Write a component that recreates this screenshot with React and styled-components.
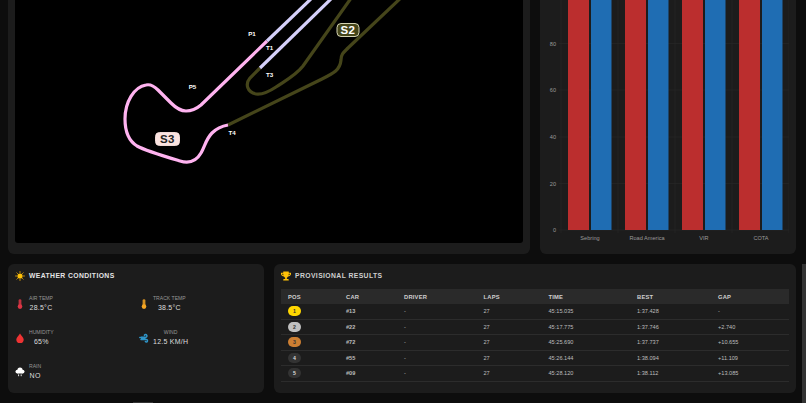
import React from "react";
import styled, { createGlobalStyle } from "styled-components";
import { FaTrophy } from "react-icons/fa";

const GlobalStyle = createGlobalStyle`
  html, body {
    margin: 0;
    height: 403px;
    overflow: hidden;
    background: #0d0d0d;
    font-family: "Liberation Sans", Arial, sans-serif;
  }
`;

const Page = styled.div`
  width: 806px;
  height: 403px;
  overflow: hidden;
  position: relative;
`;

const Grid = styled.div`
  display: grid;
  grid-template-columns: 256px 256px 256px;
  grid-template-rows: 294px 129px auto;
  column-gap: 10px;
  row-gap: 10px;
  margin-top: -40px;
  padding-left: 8px;
`;

const Card = styled.section`
  background: #1c1c1c;
  border-radius: 6px;
  padding: 7px;
  box-sizing: border-box;
  min-width: 0;
`;

const TrackCard = styled(Card)`
  grid-column: 1 / 3;
  padding-bottom: 11px;
`;

const ChartCard = styled(Card)`
  grid-column: 3;
`;

const ResultsCard = styled(Card)`
  grid-column: 2 / 4;
`;

const Canvas = styled.svg`
  display: block;
  width: 508px;
  height: 276px;
  background: #000;
  border-radius: 3px;
`;

const ChartSvg = styled.svg`
  display: block;
  width: 242px;
  height: 280px;
`;

const Title = styled.h3`
  display: flex;
  align-items: center;
  gap: 4px;
  margin: 0;
  height: 10px;
  font-size: 6.8px;
  line-height: 10px;
  font-weight: 700;
  letter-spacing: 0.4px;
  color: ${(p) => p.$color || "#e4e4e4"};
  svg {
    width: 10px;
    height: 10px;
    flex: none;
    color: #ffc107;
  }
`;

const WeatherGrid = styled.div`
  display: grid;
  grid-template-columns: 124px 110px;
  grid-auto-rows: 34px;
  margin-top: 15px;
`;

const Item = styled.div`
  display: flex;
  align-items: center;
  gap: 4px;
  height: 15px;
`;

const IconBox = styled.span`
  width: 10px;
  display: flex;
  justify-content: center;
  svg {
    display: block;
    width: 10px;
    height: 10px;
  }
`;

const ItemText = styled.div`
  display: flex;
  flex-direction: column;
  align-items: center;
  gap: 2px;
`;

const ItemLabel = styled.span`
  font-size: 5.1px;
  line-height: 6px;
  color: #969696;
`;

const ItemValue = styled.span`
  font-size: 7px;
  line-height: 9px;
  letter-spacing: 0.25px;
  color: #dcdcdc;
`;

const Table = styled.table`
  width: 508px;
  margin-top: 8px;
  border-collapse: collapse;
  table-layout: fixed;
  font-size: 5.6px;
  color: #bdbdbd;

  th {
    height: 15px;
    padding: 0 7px;
    background: #2a2a2a;
    font-size: 5.8px;
    font-weight: 700;
    letter-spacing: 0.2px;
    text-align: left;
    color: #cfcfcf;
  }
  td {
    height: 14.5px;
    padding: 0 7px;
    border-bottom: 0.6px solid #2c2c2c;
  }
`;

const CarCell = styled.td`
  font-weight: 700;
`;

const Pos = styled.span`
  display: flex;
  align-items: center;
  justify-content: center;
  width: 13px;
  height: 10px;
  border-radius: 5px;
  font-size: 5.2px;
  font-weight: 700;
  background: ${(p) => p.$bg};
  color: ${(p) => p.$fg};
`;

const ScrollThumb = styled.div`
  position: absolute;
  right: 0;
  top: 264px;
  bottom: 0;
  width: 4px;
  background: #333;
`;

const SlimMark = styled.div`
  position: absolute;
  left: 133px;
  bottom: 0;
  width: 20px;
  height: 1px;
  background: #333;
`;

const TrackLabel = styled.text`
  font-size: 6.2px;
  font-weight: 700;
  fill: #fff;
  text-anchor: middle;
`;

const SectorText = styled.text`
  font-size: 11.5px;
  font-weight: 700;
  letter-spacing: 0.5px;
  text-anchor: middle;
  fill: ${(p) => p.$fill};
`;

const AxisText = styled.text`
  font-size: 5.6px;
  fill: #9a9a9a;
  text-anchor: ${(p) => p.$anchor || "middle"};
`;

const SunIcon = () => (
  <svg viewBox="0 0 20 20">
    <circle cx="10" cy="10" r="5.2" fill="#ffc107" />
    <g stroke="#e6a50a" strokeWidth="1.6" strokeLinecap="round">
      <path d="M10 1v2.2M10 16.8V19M1 10h2.2M16.8 10H19M3.6 3.6l1.6 1.6M14.8 14.8l1.6 1.6M3.6 16.4l1.6-1.6M14.8 5.2l1.6-1.6" />
    </g>
  </svg>
);

const ThermoIcon = ({ color }) => (
  <svg viewBox="0 0 10 10">
    <rect x="3.6" y="0.2" width="2.8" height="7" rx="1.4" fill={color} opacity="0.85" />
    <circle cx="5" cy="7.6" r="2.3" fill={color} />
  </svg>
);

const DropIcon = () => (
  <svg viewBox="0 0 10 10">
    <path d="M5 0.4 C6 2.4 8.7 4.2 8.7 6.4 A3.7 3.6 0 0 1 1.3 6.4 C1.3 4.2 4 2.4 5 0.4Z" fill="#ee3333" />
  </svg>
);

const WindIcon = () => (
  <svg viewBox="0 0 10 10">
    <g fill="none" stroke="#2f95c8" strokeWidth="1.5" strokeLinecap="round">
      <path d="M0.8 4.4H6.6A1.4 1.4 0 1 0 5.4 2.2" />
      <path d="M2 6.6H7.4A1.2 1.2 0 1 1 6.4 8.6" />
    </g>
    <rect x="2" y="3.6" width="4.5" height="3.2" fill="#2f95c8" />
  </svg>
);

const RainIcon = () => (
  <svg viewBox="0 0 10 10">
    <g fill="#fff">
      <circle cx="2.4" cy="4.6" r="1.9" />
      <circle cx="5" cy="3.2" r="2.6" />
      <circle cx="7.6" cy="4.6" r="1.9" />
      <rect x="2.4" y="4" width="5.2" height="2.5" />
    </g>
    <path d="M3.6 7.4v1.8M6.2 7.4v1.8" stroke="#fff" strokeWidth="0.9" />
  </svg>
);

const results = [
  { pos: 1, car: "#13", laps: 27, time: "45:15.035", best: "1:37.428", gap: "-", bg: "#ffd700", fg: "#333" },
  { pos: 2, car: "#22", laps: 27, time: "45:17.775", best: "1:37.746", gap: "+2.740", bg: "#c0c0c0", fg: "#333" },
  { pos: 3, car: "#72", laps: 27, time: "45:25.690", best: "1:37.737", gap: "+10.655", bg: "#cd7f32", fg: "#333" },
  { pos: 4, car: "#55", laps: 27, time: "45:26.144", best: "1:38.094", gap: "+11.109", bg: "#333", fg: "#ddd" },
  { pos: 5, car: "#09", laps: 27, time: "45:28.120", best: "1:38.112", gap: "+13.085", bg: "#333", fg: "#ddd" },
];

const weather = [
  { label: "AIR TEMP", value: "28.5°C", icon: <ThermoIcon color="#dc3545" /> },
  { label: "TRACK TEMP", value: "38.5°C", icon: <ThermoIcon color="#f5a623" /> },
  { label: "HUMIDITY", value: "65%", icon: <DropIcon /> },
  { label: "WIND", value: "12.5 KM/H", icon: <WindIcon /> },
  { label: "RAIN", value: "NO", icon: <RainIcon /> },
];

const venues = [
  { name: "Sebring", x: 568 },
  { name: "Road America", x: 625 },
  { name: "VIR", x: 682 },
  { name: "COTA", x: 739 },
];

const ticks = [
  { label: "80", y: 43.5 },
  { label: "60", y: 90 },
  { label: "40", y: 137 },
  { label: "20", y: 183.5 },
  { label: "0", y: 230 },
];

function Sector({ x, y, w, fill, border, text, label }) {
  return (
    <g>
      <rect x={x - w / 2} y={y - 6.5} width={w} height={13} rx={4} fill={fill} stroke={border} strokeWidth="0.9" />
      <SectorText x={x} y={y + 4} $fill={text}>{label}</SectorText>
    </g>
  );
}

function Track() {
  return (
    <Canvas viewBox="15 -33 508 276">
      <g fill="none" strokeWidth="3.2" strokeLinecap="butt">
        <path
          stroke="#45451a"
          d="M228 125 L322 79 C334 73 340 70 341 60 C341 54 344 52 348 48 L405 -6"
        />
        <path
          stroke="#45451a"
          d="M260 68 L250 78 C245 84 247 92 256 94 C263 95 270 91 276 87 C288 79 296 75 303 66 L354 -6"
        />
        <path stroke="#d5d0fa" d="M267 41 L314 -4" />
        <path stroke="#d5d0fa" d="M260 68 L334 -4" />
        <path
          stroke="#ffb3f0"
          d="M267 41 L201 105 C195 110 191 111 186 111 C180 111 176 108 171 103 L158 90 C153 85 150 84 146 85 C134 87 125 102 125 119 C125 131 129 141 137 146 C146 151 170 158 180 161 C190 164 197 160 201 153 C205 146 206 139 212 133 C217 128 222 126 228 125"
        />
      </g>
      <TrackLabel x={252} y={36.2}>P1</TrackLabel>
      <TrackLabel x={269.5} y={49.5}>T1</TrackLabel>
      <TrackLabel x={269.5} y={77.2}>T3</TrackLabel>
      <TrackLabel x={192.5} y={89.2}>P5</TrackLabel>
      <TrackLabel x={232} y={135.2}>T4</TrackLabel>
      <Sector x={348} y={30} w={22} fill="#45451a" border="#e8e6c4" text="#fff" label="S2" />
      <Sector x={167.5} y={139} w={24} fill="#fbe3e0" border="#fbe3e0" text="#222" label="S3" />
    </Canvas>
  );
}

function Chart() {
  return (
    <ChartSvg viewBox="547 -33 242 280">
      {ticks.map((t) => (
        <g key={t.label}>
          <line x1={559} x2={789} y1={t.y} y2={t.y} stroke="#282828" strokeWidth="0.6" />
          <AxisText x={556} y={t.y + 2} $anchor="end">{t.label}</AxisText>
        </g>
      ))}
      {[561, 618, 675, 732, 789].map((x) => (
        <line key={x} x1={x} x2={x} y1={-33} y2={233} stroke="#282828" strokeWidth="0.6" />
      ))}
      {venues.map((v) => (
        <g key={v.name}>
          <rect x={v.x} y={-33} width={21} height={263} fill="#bb2e2e" />
          <rect x={v.x + 23} y={-33} width={20.5} height={263} fill="#1f6db3" />
          <AxisText x={v.x + 22} y={239.5}>{v.name}</AxisText>
        </g>
      ))}
    </ChartSvg>
  );
}

export default function App() {
  return (
    <Page>
      <GlobalStyle />
      <Grid>
        <TrackCard>
          <Track />
        </TrackCard>
        <ChartCard>
          <Chart />
        </ChartCard>
        <Card>
          <Title>
            <SunIcon />
            WEATHER CONDITIONS
          </Title>
          <WeatherGrid>
            {weather.map((w) => (
              <Item key={w.label}>
                <IconBox>{w.icon}</IconBox>
                <ItemText>
                  <ItemLabel>{w.label}</ItemLabel>
                  <ItemValue>{w.value}</ItemValue>
                </ItemText>
              </Item>
            ))}
          </WeatherGrid>
        </Card>
        <ResultsCard>
          <Title $color="#cfcfcf">
            <FaTrophy />
            PROVISIONAL RESULTS
          </Title>
          <Table>
            <colgroup>
              <col style={{ width: 58 }} />
              <col style={{ width: 58 }} />
              <col style={{ width: 79.5 }} />
              <col style={{ width: 65 }} />
              <col style={{ width: 88.5 }} />
              <col style={{ width: 81 }} />
              <col style={{ width: 78 }} />
            </colgroup>
            <thead>
              <tr>
                <th>POS</th>
                <th>CAR</th>
                <th>DRIVER</th>
                <th>LAPS</th>
                <th>TIME</th>
                <th>BEST</th>
                <th>GAP</th>
              </tr>
            </thead>
            <tbody>
              {results.map((r) => (
                <tr key={r.car}>
                  <td><Pos $bg={r.bg} $fg={r.fg}>{r.pos}</Pos></td>
                  <CarCell>{r.car}</CarCell>
                  <td>-</td>
                  <td>{r.laps}</td>
                  <td>{r.time}</td>
                  <td>{r.best}</td>
                  <td>{r.gap}</td>
                </tr>
              ))}
            </tbody>
          </Table>
        </ResultsCard>
      </Grid>
      <SlimMark />
      <ScrollThumb />
    </Page>
  );
}
